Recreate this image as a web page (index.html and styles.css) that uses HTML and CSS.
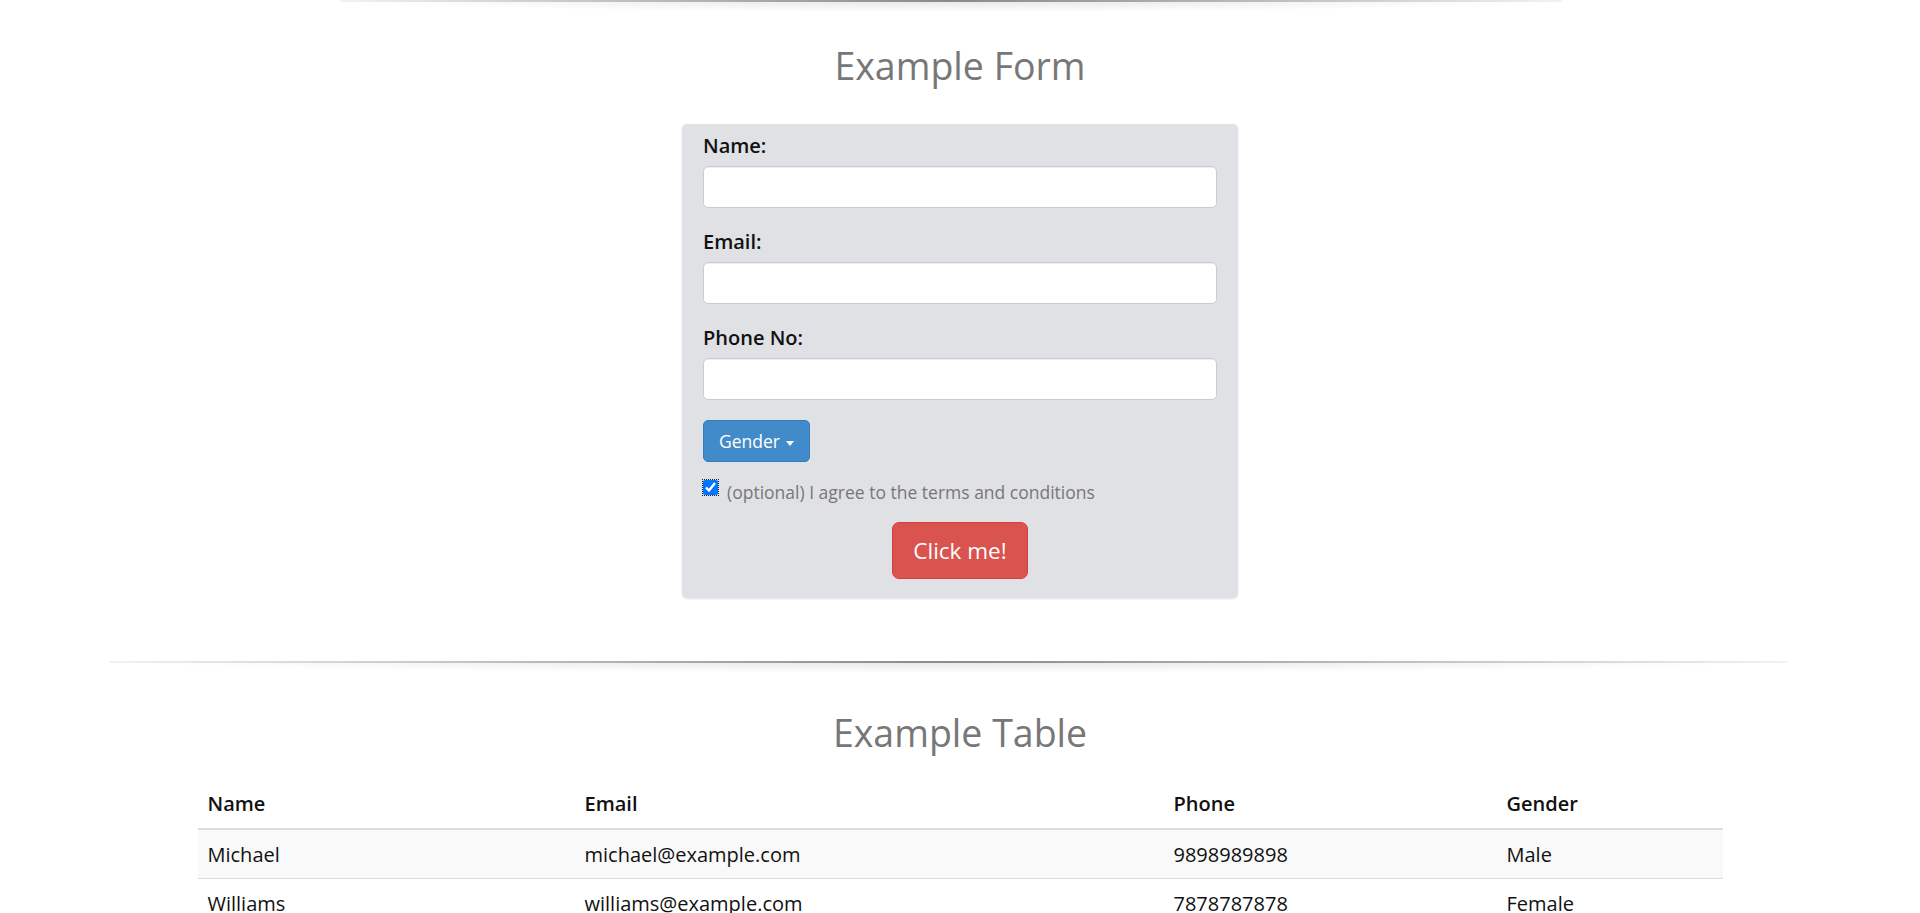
FILE: index.html
```html
<!DOCTYPE html>
<html lang="en">
<head>
<meta charset="utf-8">
<title>Example</title>
<link rel="stylesheet" href="styles.css">
</head>
<body>
<div class="divider divider-top"></div>
<h2 class="section-title title-form">Example Form</h2>
<form class="form-panel">
  <div class="form-group">
    <label class="field-label" for="name">Name:</label>
    <input class="form-control" id="name" type="text">
  </div>
  <div class="form-group">
    <label class="field-label" for="email">Email:</label>
    <input class="form-control" id="email" type="email">
  </div>
  <div class="form-group">
    <label class="field-label" for="phone">Phone No:</label>
    <input class="form-control" id="phone" type="text">
  </div>
  <button type="button" class="btn btn-primary">Gender <span class="caret"></span></button>
  <label class="check-row"><input class="check-box" type="checkbox" checked><span>(optional) I agree to the terms and conditions</span></label>
  <div class="submit-row"><button type="button" class="btn btn-danger btn-lg">Click me!</button></div>
</form>
<div class="divider divider-wide"></div>
<h2 class="section-title title-table">Example Table</h2>
<table class="data-table">
  <thead>
    <tr><th class="col-name">Name</th><th class="col-email">Email</th><th class="col-phone">Phone</th><th class="col-gender">Gender</th></tr>
  </thead>
  <tbody>
    <tr class="striped"><td>Michael</td><td>michael@example.com</td><td>9898989898</td><td>Male</td></tr>
    <tr><td>Williams</td><td>williams@example.com</td><td>7878787878</td><td>Female</td></tr>
  </tbody>
</table>
</body>
</html>
```
FILE: styles.css
```css
html, body {
  margin: 0;
  padding: 0;
  background: #fff;
}
body {
  font-family: "Open Sans", "Liberation Sans", sans-serif;
  font-size: 17.5px;
  line-height: 25px;
  color: #222;
}
.divider {
  position: relative;
  height: 12px;
  background: radial-gradient(ellipse 50% 100% at 50% 0, rgba(0,0,0,0.10), rgba(0,0,0,0.03) 70%, rgba(0,0,0,0) 100%);
}
.divider::before {
  content: "";
  position: absolute;
  left: 0;
  right: 0;
  top: 0;
  height: 2px;
  background: linear-gradient(to right, rgba(0,0,0,0.05), rgba(0,0,0,0.4) 50%, rgba(0,0,0,0.05));
}
.divider-top {
  width: 1222px;
  margin-left: 340px;
}
.divider-wide {
  width: 1678px;
  margin: 63px 0 0 110px;
}
.section-title {
  margin: 0;
  font-size: 37.5px;
  line-height: 41px;
  font-weight: 400;
  color: #777;
  text-align: center;
}
.title-form {
  margin-top: 33px;
}
.title-table {
  margin-top: 39px;
}
.form-panel {
  box-sizing: border-box;
  width: 556px;
  margin: 38px auto 0;
  padding: 8px 21px 19px;
  background: #dfe1e4;
  border-radius: 5px;
  box-shadow: 0 1px 2px rgba(0,0,0,0.12);
}
.form-group {
  margin-bottom: 20px;
}
.field-label {
  display: block;
  font-size: 20px;
  font-weight: 600;
  line-height: 27px;
  margin-bottom: 7px;
  color: #111;
}
.form-control {
  display: block;
  box-sizing: border-box;
  width: 100%;
  height: 42px;
  margin: 0;
  padding: 7px 15px;
  border: 1px solid #ccc;
  border-radius: 5px;
  background: #fff;
  box-shadow: inset 0 1px 1px rgba(0,0,0,0.075);
  font: inherit;
}
.btn {
  box-sizing: border-box;
  display: inline-block;
  font-family: inherit;
  font-weight: 400;
  color: #fff;
  border: 1px solid transparent;
  border-radius: 5px;
  cursor: pointer;
}
.btn-primary {
  height: 42px;
  padding: 0 15px;
  font-size: 17.5px;
  line-height: 40px;
  background: #428bca;
  border-color: #357ebd;
}
.caret {
  display: inline-block;
  width: 0;
  height: 0;
  margin-left: 1px;
  vertical-align: middle;
  border-top: 5px solid #fff;
  border-left: 4.5px solid transparent;
  border-right: 4.5px solid transparent;
}
.check-row {
  display: flex;
  align-items: flex-start;
  gap: 9px;
  margin-top: 18px;
  color: #777;
  line-height: 25px;
}
.check-box {
  width: 15px;
  height: 15px;
  margin: 0;
  flex: none;
  outline: 1px dotted #222;
  outline-offset: 0;
}
.submit-row {
  display: flex;
  justify-content: center;
  margin-top: 17px;
}
.btn-danger {
  background: #d9534f;
  border-color: #d43f3a;
}
.btn-lg {
  height: 57px;
  padding: 0 20px;
  font-size: 22.5px;
  line-height: 55px;
  border-radius: 7px;
}
.data-table {
  width: 1525px;
  margin: 28px auto 0;
  border-collapse: collapse;
  font-size: 20px;
}
.data-table th,
.data-table td {
  text-align: left;
  line-height: 25px;
  color: #111;
}
.data-table th {
  padding: 10px 10px 12px;
  font-weight: 600;
  border-bottom: 2px solid #ddd;
}
.data-table td {
  padding: 12px 10px 11px;
  font-weight: 400;
  border-bottom: 1px solid #ddd;
}
.data-table .striped td {
  background: #f9f9f9;
}
.col-name { width: 357px; }
.col-email { width: 569px; }
.col-phone { width: 313px; }
.col-gender { width: 206px; }
```
